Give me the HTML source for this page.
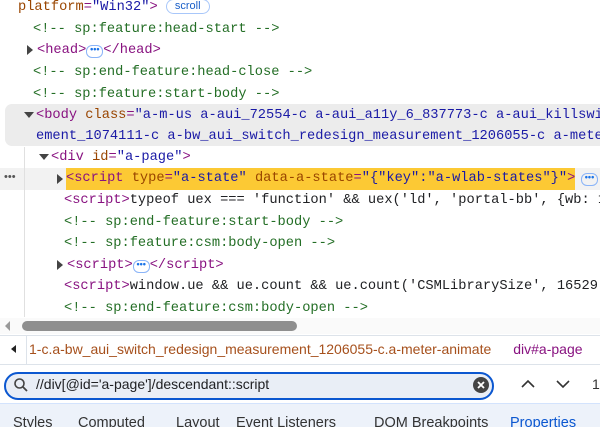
<!DOCTYPE html>
<html style="overflow:hidden"><head><style>
html,body{overflow:hidden}
body{margin:0;width:600px;height:427px;overflow:hidden;background:#fff;font-family:"Liberation Mono",monospace;font-size:13.7px;position:relative}
.l{position:absolute;white-space:nowrap;height:21px;line-height:21px}
.t{color:#881280}.a{color:#994500}.v{color:#1a1aa6}.c{color:#236e25}.k{color:#202124}
.tri{position:absolute;width:0;height:0;border-left:6px solid #444;border-top:5px solid transparent;border-bottom:5px solid transparent}
.trd{position:absolute;width:0;height:0;border-top:6px solid #444;border-left:5px solid transparent;border-right:5px solid transparent}
.dots{display:inline-block;width:15px;height:11px;border:1px solid #8ab4f8;border-radius:6px;font-size:9px;line-height:7px;text-align:center;color:#1a73e8;vertical-align:1px;font-family:"Liberation Sans",sans-serif;font-weight:bold}
.ui{font-family:"Liberation Sans",sans-serif}
.tab{position:absolute;top:413px;font-size:14.5px;color:#333;white-space:nowrap;line-height:21px}
</style></head><body>
<div style="position:absolute;left:5px;top:104px;width:600px;height:42px;background:#ececec;border-radius:7px 0 0 7px"></div>
<div style="position:absolute;left:0;top:168px;width:600px;height:22px;background:#f2f2f2"></div>
<div style="position:absolute;left:24px;top:147px;width:1px;height:170px;background:#e0e0e0"></div>

<div class="l" style="left:18px;top:-3px"><span class="a">platform</span><span class="t">=</span><span class="v">"Win32"</span><span class="t">&gt;</span> <span class="ui" style="display:inline-block;border:1px solid #a8c7fa;border-radius:9px;font-size:11px;line-height:13px;padding:0 8px;color:#1a5fc8;vertical-align:1px">scroll</span></div>
<div class="l c" style="left:33px;top:19px">&lt;!-- sp:feature:head-start --&gt;</div>
<div class="tri" style="left:27px;top:45px"></div>
<div class="l" style="left:37px;top:40px"><span class="t">&lt;head&gt;</span><span class="dots">•••</span><span class="t">&lt;/head&gt;</span></div>
<div class="l c" style="left:33px;top:62px">&lt;!-- sp:end-feature:head-close --&gt;</div>
<div class="l c" style="left:33px;top:84px">&lt;!-- sp:feature:start-body --&gt;</div>
<div class="trd" style="left:24px;top:112px"></div>
<div class="l" style="left:36px;top:105px;width:564px;overflow:hidden"><span class="t">&lt;body </span><span class="a">class</span><span class="t">=</span><span class="v">"a-m-us a-aui_72554-c a-aui_a11y_6_837773-c a-aui_killswitch</span></div>
<div class="l v" style="left:36px;top:126px;width:564px;overflow:hidden">ement_1074111-c a-bw_aui_switch_redesign_measurement_1206055-c a-meter-animate</div>
<div class="trd" style="left:39px;top:154px"></div>
<div class="l" style="left:51px;top:147px"><span class="t">&lt;div </span><span class="a">id</span><span class="t">=</span><span class="v">"a-page"</span><span class="t">&gt;</span></div>
<div class="l k ui" style="left:4px;top:167px;font-size:11px;color:#555">•••</div>
<div class="tri" style="left:57px;top:174px"></div>
<div class="l" style="left:66px;top:168px;height:22px;background:#fcc934"><span class="t">&lt;script </span><span class="a">type</span><span class="t">=</span><span class="v">"a-state" </span><span class="a">data-a-state</span><span class="t">=</span><span class="v">"{"key":"a-wlab-states"}"</span><span class="t">&gt;</span></div>
<div class="l" style="left:581px;top:168px"><span class="dots">•••</span></div>
<div class="l k" style="left:64px;top:190px;width:536px;overflow:hidden"><span class="t">&lt;script&gt;</span>typeof uex === 'function' &amp;&amp; uex('ld', 'portal-bb', {wb: 1})</div>
<div class="l c" style="left:64px;top:212px">&lt;!-- sp:end-feature:start-body --&gt;</div>
<div class="l c" style="left:64px;top:233px">&lt;!-- sp:feature:csm:body-open --&gt;</div>
<div class="tri" style="left:57px;top:260px"></div>
<div class="l" style="left:67px;top:255px"><span class="t">&lt;script&gt;</span><span class="dots">•••</span><span class="t">&lt;/script&gt;</span></div>
<div class="l k" style="left:64px;top:276px;width:536px;overflow:hidden"><span class="t">&lt;script&gt;</span>window.ue &amp;&amp; ue.count &amp;&amp; ue.count('CSMLibrarySize', 16529)</div>
<div class="l c" style="left:64px;top:298px">&lt;!-- sp:end-feature:csm:body-open --&gt;</div>

<div style="position:absolute;left:0;top:318px;width:600px;height:16px;background:#fafafa"></div>
<div style="position:absolute;left:5px;top:321px;border-right:5px solid #999;border-top:5px solid transparent;border-bottom:5px solid transparent"></div>
<div style="position:absolute;left:22px;top:321px;width:275px;height:10px;background:#8f8f8f;border-radius:5px"></div>
<div style="position:absolute;left:0;top:335px;width:600px;height:1px;background:#dde3ea"></div>
<div style="position:absolute;left:0;top:336px;width:26px;height:28px;border-right:1px solid #dde3ea;background:#fff"></div>
<div style="position:absolute;left:11px;top:345px;border-right:5px solid #222;border-top:4px solid transparent;border-bottom:4px solid transparent"></div>
<div class="l ui" style="left:29px;top:339px;font-size:14px;color:#a6501c">1-c.a-bw_aui_switch_redesign_measurement_1206055-c.a-meter-animate<span style="color:#881280;margin-left:22px">div#a-page</span></div>
<div style="position:absolute;left:0;top:364px;width:600px;height:1px;background:#dde3ea"></div>
<div style="position:absolute;left:4px;top:372px;width:486px;height:24px;border:2px solid #0b57d0;border-radius:14px;background:#e9eef6"></div>
<svg style="position:absolute;left:13px;top:377px" width="16" height="16" viewBox="0 0 16 16"><circle cx="6.5" cy="6.5" r="4.5" fill="none" stroke="#444" stroke-width="1.6"/><path d="M10 10l4 4" stroke="#444" stroke-width="1.8"/></svg>
<div class="l ui" style="left:36px;top:374px;font-size:14px;color:#202124">//div[@id='a-page']/descendant::script</div>
<svg style="position:absolute;left:473px;top:377px" width="16" height="16" viewBox="0 0 16 16"><circle cx="8" cy="8" r="8" fill="#444"/><path d="M5 5l6 6M11 5l-6 6" stroke="#fff" stroke-width="1.8"/></svg>
<svg style="position:absolute;left:520px;top:377px" width="16" height="14" viewBox="0 0 16 14"><path d="M2 10l6-6 6 6" fill="none" stroke="#333" stroke-width="1.6"/></svg>
<svg style="position:absolute;left:555px;top:377px" width="16" height="14" viewBox="0 0 16 14"><path d="M2 4l6 6 6-6" fill="none" stroke="#333" stroke-width="1.6"/></svg>
<div class="l ui" style="left:592px;top:374px;font-size:14px;color:#333">1</div>
<div style="position:absolute;left:0;top:403px;width:600px;height:24px;background:#edf2fa;border-top:1px solid #d3e3fd"></div>
<div class="tab ui" style="left:13px">Styles</div>
<div class="tab ui" style="left:78px">Computed</div>
<div class="tab ui" style="left:176px">Layout</div>
<div class="tab ui" style="left:236px">Event Listeners</div>
<div class="tab ui" style="left:374px">DOM Breakpoints</div>
<div class="tab ui" style="left:510px;color:#0b57d0">Properties</div>
</body></html>
